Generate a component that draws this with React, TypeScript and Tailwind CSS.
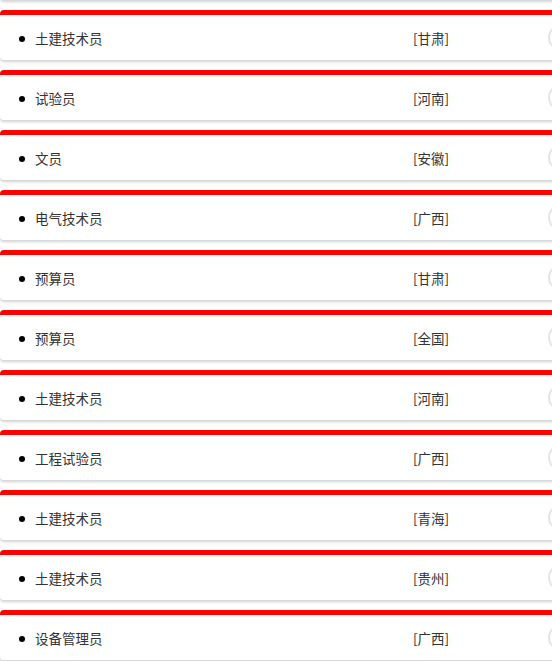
const jobs = [
  { title: "土建技术员", area: "甘肃" },
  { title: "试验员", area: "河南" },
  { title: "文员", area: "安徽" },
  { title: "电气技术员", area: "广西" },
  { title: "预算员", area: "甘肃" },
  { title: "预算员", area: "全国" },
  { title: "土建技术员", area: "河南" },
  { title: "工程试验员", area: "广西" },
  { title: "土建技术员", area: "青海" },
  { title: "土建技术员", area: "贵州" },
  { title: "设备管理员", area: "广西" },
];

function Card({ title, area }: { title?: string; area?: string }) {
  return (
    <li className="relative mt-[10px] flex h-[50px] items-center rounded-[4px] border-t-[5px] border-[#ff0000] bg-white pt-[2px] shadow-[0_2px_3px_rgba(0,0,0,0.18)]">
      {title && (
        <>
          <span className="ml-[19px] h-[6px] w-[6px] rounded-full bg-black" />
          <span className="ml-[10px] w-[378px]">{title}</span>
          <span>[{area}]</span>
        </>
      )}
      <span className="absolute left-[548px] top-[9px] h-[27px] w-[27px] rounded-full border-2 border-[#e5e5e5] bg-white" />
    </li>
  );
}

export default function App() {
  return (
    <div className="h-[661px] w-[552px] overflow-hidden bg-white font-['Noto_Sans_CJK_SC',sans-serif] text-[13.5px] text-[#333]">
      <ul className="-mt-[60px] w-[600px]">
        {/* previous item, scrolled off the top */}
        <Card />
        {jobs.map((job, i) => (
          <Card key={i} title={job.title} area={job.area} />
        ))}
      </ul>
    </div>
  );
}
